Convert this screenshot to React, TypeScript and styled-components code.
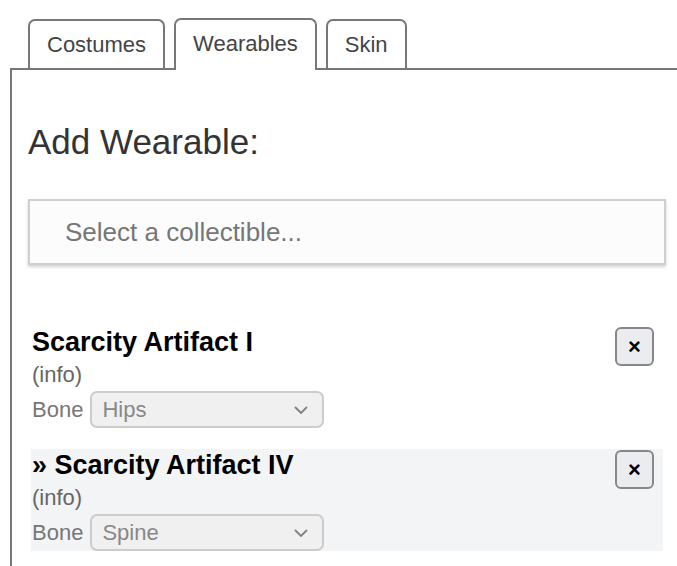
import styled, { createGlobalStyle } from "styled-components";

/* page reset, the panel runs past the right edge so hide the overflow */
const Global = createGlobalStyle`
    html, body {
        margin: 0;
        padding: 0;
        background: #ffffff;
        overflow: hidden;
    }
    body {
        font-family: "Liberation Sans", Arial, sans-serif;
    }
`;

const Page = styled.div`
    box-sizing: border-box;
    display: flex;
    flex-direction: column;
    height: 100vh;
    padding: 18px 0 0 10px;
`;

const TabRow = styled.div`
    display: flex;
    align-items: flex-end;
    gap: 9px;
    margin-left: 18px;
`;

const Tab = styled.button<{ $active?: boolean }>`
    box-sizing: border-box;
    height: ${(p) => (p.$active ? "52px" : "49px")};
    margin-bottom: ${(p) => (p.$active ? "-2px" : "0")};
    padding: 0 17px ${(p) => (p.$active ? "3px" : "0")};
    border: 2px solid #777777;
    border-bottom: none;
    border-radius: 7px 7px 0 0;
    background: #ffffff;
    color: #444444;
    font-family: "Liberation Sans", Arial, sans-serif;
    font-size: 22px;
    position: relative;
    z-index: ${(p) => (p.$active ? 1 : 0)};
    cursor: pointer;
`;

const Panel = styled.section`
    flex: 1;
    width: 638px;
    padding: 52px 16px 0;
    border-top: 2px solid #777777;
    border-left: 2px solid #777777;
    border-right: 2px solid #777777;
`;

const Title = styled.h2`
    margin: 0;
    font-size: 35px;
    line-height: 40px;
    font-weight: normal;
    color: #333333;
`;

const Picker = styled.input`
    display: block;
    box-sizing: border-box;
    width: 100%;
    height: 66px;
    margin-top: 37px;
    padding: 0 0 0 35px;
    border: 2px solid #cfcfcf;
    background: #fcfcfc;
    box-shadow: 0 2px 3px rgba(0, 0, 0, 0.18);
    font-family: "Liberation Sans", Arial, sans-serif;
    font-size: 26px;
    color: #333;
    outline: none;

    &::placeholder {
        color: #767676;
    }
`;

const ItemList = styled.div`
    display: flex;
    flex-direction: column;
    gap: 21px;
    margin-top: 61px;
    padding: 0 3px;
`;

const Item = styled.div<{ $current?: boolean }>`
    display: grid;
    grid-template-columns: 1fr auto;
    padding-left: 1px;
    background: ${(p) => (p.$current ? "#f3f4f6" : "transparent")};
`;

const ItemName = styled.div`
    font-size: 27px;
    line-height: 32px;
    font-weight: bold;
    color: #000000;
`;

const Info = styled.div`
    grid-column: 1;
    font-size: 22px;
    line-height: 33px;
    color: #666666;
`;

const BoneRow = styled.label`
    grid-column: 1;
    display: flex;
    align-items: center;
    gap: 7px;
    height: 37px;
    font-size: 22px;
    color: #777777;
`;

const BoneSelect = styled.div`
    box-sizing: border-box;
    display: flex;
    align-items: center;
    justify-content: space-between;
    width: 234px;
    height: 37px;
    padding: 0 14px 0 10px;
    border: 2px solid #cccccc;
    border-radius: 7px;
    background: #f0f0f0;
    color: #888888;
    font-size: 22px;
`;

const CloseButton = styled.button`
    grid-column: 2;
    grid-row: 1 / span 3;
    align-self: start;
    box-sizing: border-box;
    width: 39px;
    height: 39px;
    margin: 1px 9px 0 0;
    padding: 0;
    border: 2px solid #888888;
    border-radius: 6px;
    background: #eaecf0;
    color: #000;
    font-family: "Liberation Sans", Arial, sans-serif;
    font-size: 22px;
    font-weight: bold;
    line-height: 1;
`;

function Chevron() {
    return (
        <svg width="14" height="8" viewBox="0 0 14 8">
            <path d="M1 1 L7 7 L13 1" fill="none" stroke="#808080" strokeWidth="1.8" />
        </svg>
    );
}

const wearables = [
    { name: "Scarcity Artifact I", bone: "Hips", current: false },
    { name: "» Scarcity Artifact IV", bone: "Spine", current: true },
];

export default function App() {
    return (
        <Page>
            <Global />
            <TabRow>
                <Tab>Costumes</Tab>
                <Tab $active>Wearables</Tab>
                <Tab>Skin</Tab>
            </TabRow>
            <Panel>
                <Title>Add Wearable:</Title>
                <Picker placeholder="Select a collectible..." />
                <ItemList>
                    {wearables.map((w) => (
                        <Item key={w.name} $current={w.current}>
                            <ItemName>{w.name}</ItemName>
                            <CloseButton>×</CloseButton>
                            <Info>(info)</Info>
                            <BoneRow>
                                Bone
                                <BoneSelect>
                                    {w.bone}
                                    <Chevron />
                                </BoneSelect>
                            </BoneRow>
                        </Item>
                    ))}
                </ItemList>
            </Panel>
        </Page>
    );
}
